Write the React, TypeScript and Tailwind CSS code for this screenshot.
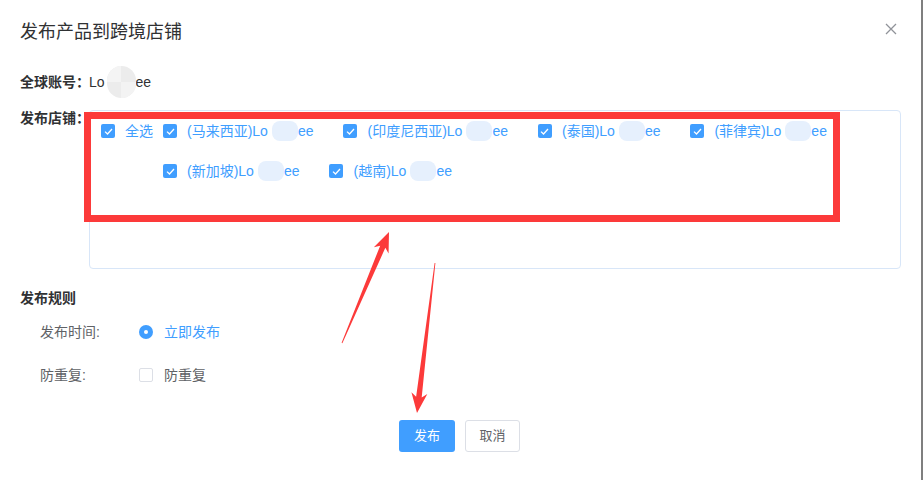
import React from 'react';

const shopsRow1 = [
  { name: '(马来西亚)Lo', tail: 'ee' },
  { name: '(印度尼西亚)Lo', tail: 'ee' },
  { name: '(泰国)Lo', tail: 'ee' },
  { name: '(菲律宾)Lo', tail: 'ee' },
];

const shopsRow2 = [
  { name: '(新加坡)Lo', tail: 'ee' },
  { name: '(越南)Lo', tail: 'ee' },
];

const CheckBox = ({ checked = true }: { checked?: boolean }) =>
  checked ? (
    <span className="inline-flex h-[14px] w-[14px] shrink-0 items-center justify-center rounded-[2px] bg-[#409eff]">
      <svg width="9" height="7" viewBox="0 0 9 7">
        <path d="M1 3.6 L3.5 6 L8 1" fill="none" stroke="#fff" strokeWidth="1.3" />
      </svg>
    </span>
  ) : (
    <span className="inline-block h-[14px] w-[14px] shrink-0 rounded-[2px] border border-[#dcdfe6] bg-white" />
  );

// blurred-out part of the shop name
const Blob = () => (
  <span className="ml-[4px] inline-block h-[20px] w-[26px] rounded-[8px] bg-[#e6f0fd] align-middle" />
);

const ShopItem = ({ name, tail }: { name: string; tail: string }) => (
  <label className="mr-[30px] flex h-[20px] items-center">
    <CheckBox />
    <span className="ml-[10px] flex items-center whitespace-nowrap text-[14px] text-[#409eff]">
      {name}
      <Blob />
      {tail}
    </span>
  </label>
);

// annotation arrow polygon (tapered shaft + head)
const arrowPoints = (tx: number, ty: number, px: number, py: number) => {
  const dx = px - tx;
  const dy = py - ty;
  const len = Math.sqrt(dx * dx + dy * dy);
  const ux = dx / len;
  const uy = dy / len;
  const nx = -uy;
  const ny = ux;
  const hl = 20;
  const hx = px - ux * hl;
  const hy = py - uy * hl;
  const bx = px - ux * (hl - 4);
  const by = py - uy * (hl - 4);
  const pts = [
    [tx + nx * 0.4, ty + ny * 0.4],
    [bx + nx * 2.8, by + ny * 2.8],
    [hx + nx * 8, hy + ny * 8],
    [px, py],
    [hx - nx * 8, hy - ny * 8],
    [bx - nx * 2.8, by - ny * 2.8],
    [tx - nx * 0.4, ty - ny * 0.4],
  ];
  return pts.map((p) => p.join(',')).join(' ');
};

export default function App() {
  return (
    <div
      className="relative flex h-[480px] w-[923px] overflow-hidden bg-white"
      style={{ fontFamily: '"Liberation Sans", "Noto Sans CJK SC", sans-serif' }}
    >
      <div className="flex-1">
        {/* Header */}
        <div className="flex h-[64px] items-center justify-between pl-[20px] pr-[24px]">
          <h2 className="text-[18px] leading-[24px] text-[#303133]">发布产品到跨境店铺</h2>
          <svg width="12" height="12" viewBox="0 0 12 12" className="-mt-[6px]">
            <path d="M1 1 L11 11 M11 1 L1 11" stroke="#909399" strokeWidth="1.3" />
          </svg>
        </div>

        <div className="px-[20px]">
          {/* Global account */}
          <div className="mt-[8px] flex h-[20px] items-center text-[14px]">
            <span className="w-[69px] shrink-0 whitespace-nowrap font-bold text-[#303133]">全球账号：</span>
            <span className="flex items-center text-[#303133]">
              Lo
              <span className="relative -my-[6px] ml-[2px] inline-block h-[32px] w-[29px] overflow-hidden rounded-full bg-[#ececec]">
                <span className="absolute left-0 top-0 h-[16px] w-[14px] bg-[#f4f4f4]" />
                <span className="absolute bottom-0 right-0 h-[16px] w-[15px] bg-[#f3f3f3]" />
              </span>
              ee
            </span>
          </div>

          {/* Shops */}
          <div className="mt-[18px] flex">
            <span className="w-[69px] shrink-0 whitespace-nowrap text-[14px] font-bold leading-[16px] text-[#303133]">
              发布店铺：
            </span>
            <div className="flex h-[159px] flex-1 rounded-[4px] border border-[#d8e6f8] pl-[11px] pt-[10px]">
              <label className="mr-[10px] flex h-[20px] items-center">
                <CheckBox />
                <span className="ml-[10px] text-[14px] text-[#409eff]">全选</span>
              </label>
              <div className="flex flex-col gap-[20px]">
                <div className="flex">
                  {shopsRow1.map((s) => (
                    <ShopItem key={s.name} {...s} />
                  ))}
                </div>
                <div className="flex">
                  {shopsRow2.map((s) => (
                    <ShopItem key={s.name} {...s} />
                  ))}
                </div>
              </div>
            </div>
          </div>

          {/* Rules */}
          <div className="mt-[19px] text-[14px] font-bold leading-[20px] text-[#303133]">发布规则</div>
          <div className="mt-[14px] flex h-[20px] items-center pl-[20px] text-[14px]">
            <span className="w-[99px] text-[#606266]">发布时间:</span>
            <span className="flex h-[14px] w-[14px] items-center justify-center rounded-full bg-[#409eff]">
              <span className="h-[4px] w-[4px] rounded-full bg-white" />
            </span>
            <span className="ml-[11px] text-[#409eff]">立即发布</span>
          </div>
          <div className="mt-[23px] flex h-[20px] items-center pl-[20px] text-[14px]">
            <span className="w-[99px] text-[#606266]">防重复:</span>
            <CheckBox checked={false} />
            <span className="ml-[11px] text-[#606266]">防重复</span>
          </div>

          {/* Footer */}
          <div className="mt-[35px] flex justify-center gap-[10px] pr-[2px]">
            <button className="h-[32px] w-[56px] rounded-[3px] bg-[#409eff] text-[13px] text-white">发布</button>
            <button className="h-[32px] w-[55px] rounded-[3px] border border-[#dcdfe6] bg-white text-[13px] text-[#606266]">
              取消
            </button>
          </div>
        </div>
      </div>
      <div className="w-[2px] bg-[#7f7f7f]" />

      {/* Annotations */}
      <div className="pointer-events-none absolute left-[84px] top-[112px] h-[110px] w-[756px] border-[7px] border-[#fc3a3a]" />
      <svg className="pointer-events-none absolute left-0 top-0" width="923" height="480">
        <polygon points={arrowPoints(342, 343, 389, 232)} fill="#fc3a3a" />
        <polygon points={arrowPoints(435, 263, 417, 413)} fill="#fc3a3a" />
      </svg>
    </div>
  );
}
